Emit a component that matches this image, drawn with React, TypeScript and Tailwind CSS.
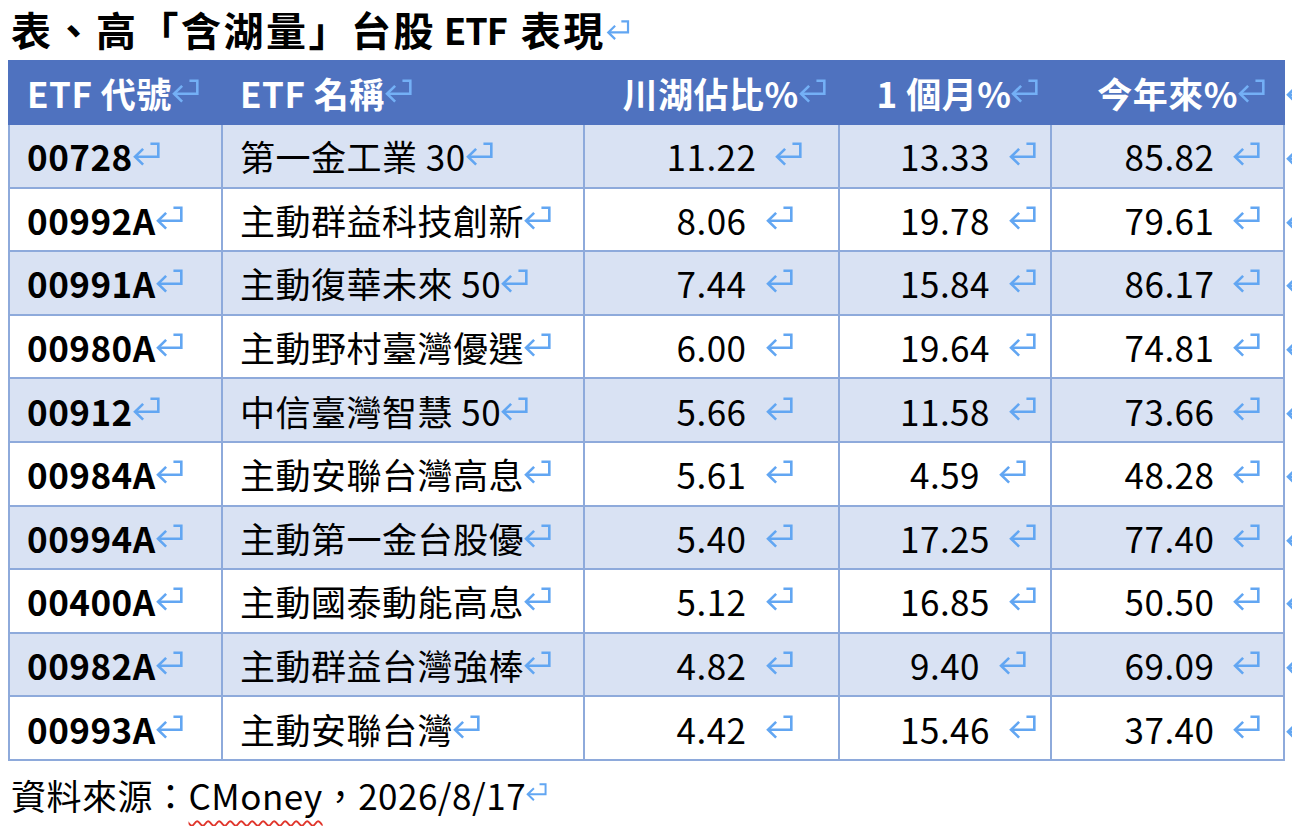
import React from "react"

type Row = {
  code: string
  name: string
  share: string
  month: string
  ytd: string
}

const rows: Row[] = [
  { code: "00728", name: "第一金工業 30", share: "11.22", month: "13.33", ytd: "85.82" },
  { code: "00992A", name: "主動群益科技創新", share: "8.06", month: "19.78", ytd: "79.61" },
  { code: "00991A", name: "主動復華未來 50", share: "7.44", month: "15.84", ytd: "86.17" },
  { code: "00980A", name: "主動野村臺灣優選", share: "6.00", month: "19.64", ytd: "74.81" },
  { code: "00912", name: "中信臺灣智慧 50", share: "5.66", month: "11.58", ytd: "73.66" },
  { code: "00984A", name: "主動安聯台灣高息", share: "5.61", month: "4.59", ytd: "48.28" },
  { code: "00994A", name: "主動第一金台股優", share: "5.40", month: "17.25", ytd: "77.40" },
  { code: "00400A", name: "主動國泰動能高息", share: "5.12", month: "16.85", ytd: "50.50" },
  { code: "00982A", name: "主動群益台灣強棒", share: "4.82", month: "9.40", ytd: "69.09" },
  { code: "00993A", name: "主動安聯台灣", share: "4.42", month: "15.46", ytd: "37.40" }
]

// Word paragraph mark (↵)
const Mark: React.FC<{ className?: string }> = ({ className }) => (
  <svg
    viewBox="0 0 24 22"
    fill="none"
    stroke="currentColor"
    strokeWidth="2.3"
    className={`shrink-0 ${className ?? ""}`}
  >
    <path d="M15.5 1.5H22.5V13H1.8" />
    <path d="M9 6L1.8 13L9 20" />
  </svg>
)

const cols = "grid grid-cols-[213px_362px_255px_212px_235px]"
const markCls = "h-[25px] w-[27px] -translate-y-[1px] text-[#62a6f2]"
const headMark = "h-[25px] w-[27px] -translate-y-[1px] text-[#74b0f6]"

const Centered: React.FC<{ value: string; gap?: boolean }> = ({ value, gap }) => (
  <div className="grid w-full grid-cols-[1fr_auto_1fr] items-center">
    <span />
    <span>{value}</span>
    <span className="flex">
      <Mark className={gap ? `ml-[19px] ${markCls}` : headMark} />
    </span>
  </div>
)

export default function App() {
  return (
    <div
      lang="zh-Hant-TW"
      className="h-[826px] w-[1292px] overflow-hidden bg-white text-black"
      style={{ fontFamily: '"Noto Sans CJK TC", "Noto Sans", sans-serif' }}
    >
      <div className="flex h-[60px] items-start pl-[11px] text-[40px] font-bold leading-[58px]">
        <span className="tracking-[2.5px]">表、高「含湖量」台股</span>
        <span className="ml-[8px] text-[36px] tracking-[-1px]">ETF</span>
        <span className="ml-[14px] tracking-[2.5px]">表現</span>
        <Mark className="mt-[20px] h-[21px] w-[24px] text-[#62a6f2]" />
      </div>

      <div className="ml-[8px] text-[35px] leading-none tracking-[0.5px]">
        <div className="flex items-center">
          <div
            className={`${cols} h-[65px] w-[1277px] shrink-0 items-center bg-[#4f72bf] font-bold text-white`}
          >
            <div className="flex items-center pl-[19px]">
              ETF 代號
              <Mark className={headMark} />
            </div>
            <div className="flex items-center pl-[19px]">
              ETF 名稱
              <Mark className={headMark} />
            </div>
            <Centered value="川湖佔比%" />
            <Centered value="1 個月%" />
            <Centered value="今年來%" />
          </div>
          <Mark className="ml-[1px] h-[25px] w-[27px] text-[#62a6f2]" />
        </div>

        {rows.map((r, i) => (
          <div key={r.code} className="flex items-center">
            <div
              className={`${cols} h-[63.6px] w-[1277px] shrink-0 border-x-2 border-b-2 border-[#8eaadb] ${
                i % 2 === 0 ? "bg-[#d9e2f3]" : "bg-white"
              }`}
            >
              <div className="flex items-center border-r-2 border-[#8eaadb] pl-[17px] font-bold">
                {r.code}
                <Mark className={markCls} />
              </div>
              <div className="flex items-center border-r-2 border-[#8eaadb] pl-[17px]">
                {r.name}
                <Mark className={markCls} />
              </div>
              <div className="flex items-center border-r-2 border-[#8eaadb]">
                <Centered value={r.share} gap />
              </div>
              <div className="flex items-center border-r-2 border-[#8eaadb]">
                <Centered value={r.month} gap />
              </div>
              <div className="flex items-center">
                <Centered value={r.ytd} gap />
              </div>
            </div>
            <Mark className="ml-[1px] h-[25px] w-[27px] text-[#62a6f2]" />
          </div>
        ))}
      </div>

      <div className="flex h-[68px] items-center pl-[11px] text-[35px] tracking-[0.5px]">
        <span>資料來源：</span>
        <span className="underline decoration-[#e0352b] decoration-wavy decoration-[1.5px] underline-offset-[10px]">
          CMoney
        </span>
        <span>，2026/8/17</span>
        <Mark className="h-[19px] w-[21px] -translate-y-[2px] text-[#62a6f2]" />
      </div>
    </div>
  )
}
